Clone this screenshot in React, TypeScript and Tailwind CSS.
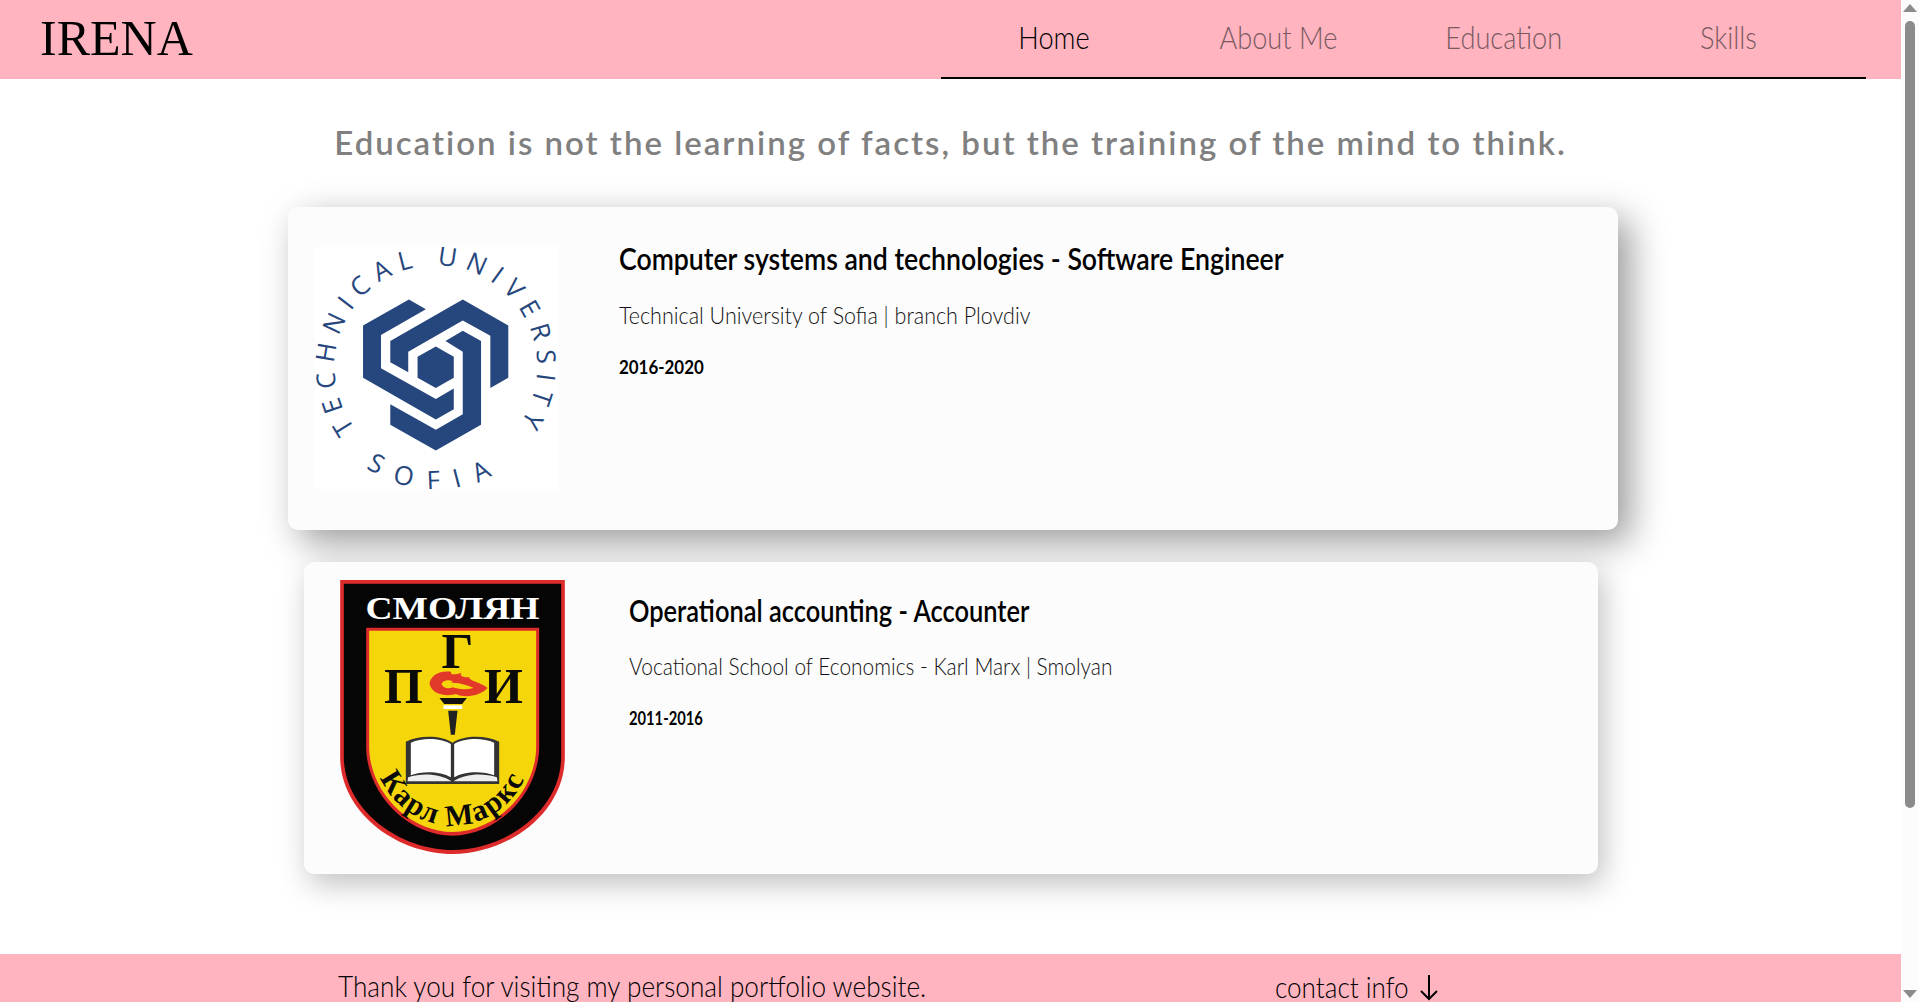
const navItems = [
  { label: "Home", active: true },
  { label: "About Me", active: false },
  { label: "Education", active: false },
  { label: "Skills", active: false },
];

function TuLogo() {
  return (
    <svg viewBox="105 140 733 728" className="w-[244px] h-[242px] shrink-0 bg-white">
      <defs>
        <path id="tu-top" d="M315 764 A305 305 0 1 1 621 764" />
        <path id="tu-bottom" d="M186 737 A368 368 0 0 0 750 737" />
      </defs>
      <g fill="#26477d">
        <polygon points="387,298 438,327 303,405 303,505 468,597 522,566 522,628 468,659 249,533 249,376" />
        <polygon points="331,423 549,298 686,376 686,533 632,564 632,407 549,361 385,455 385,517 331,487" />
        <polygon points="549,392 604,423 604,675 468,752 331,675 331,613 468,690 549,643 549,455 497,423" />
        <polygon points="468,439 522,470 522,533 468,564 413,533 413,470" />
      </g>
      <text fill="#26477d" fontFamily="'Open Sans', sans-serif" fontWeight="500" fontSize="78" letterSpacing="25">
        <textPath href="#tu-top" startOffset="50%" textAnchor="middle">TECHNICAL UNIVERSITY</textPath>
      </text>
      <text fill="#26477d" fontFamily="'Open Sans', sans-serif" fontWeight="500" fontSize="78" letterSpacing="46">
        <textPath href="#tu-bottom" startOffset="50%" textAnchor="middle">SOFIA</textPath>
      </text>
    </svg>
  );
}

function SchoolLogo() {
  return (
    <svg viewBox="148 60 674 822" className="w-[225px] h-[274px] shrink-0">
      <defs>
        <path id="school-arc" d="M249 560 A236 236 0 0 0 721 560" />
      </defs>
      <path d="M148 60H822V590C822 760 650 882 485 882C320 882 148 760 148 590Z" fill="#dc2b2a" />
      <path d="M159 71H811V590C811 750 645 870 485 870C325 870 159 750 159 590Z" fill="#050505" />
      <path d="M226 203H745V560C745 700 620 827 485 827C350 827 226 700 226 560Z" fill="#dc2b2a" />
      <path d="M235 212H736V560C736 695 615 816 485 816C355 816 235 695 235 560Z" fill="#f5d60b" />
      <text x="224" y="178" textLength="522" lengthAdjust="spacingAndGlyphs" fill="#fff" fontFamily="'Liberation Serif', serif" fontWeight="700" fontSize="96">СМОЛЯН</text>
      <g fill="#0a0a0a" fontFamily="'Liberation Serif', serif" fontWeight="700" fontSize="150">
        <text x="500" y="325" textAnchor="middle">Г</text>
        <text x="338" y="430" textAnchor="middle">П</text>
        <text x="638" y="430" textAnchor="middle">И</text>
      </g>
      {/* torch */}
      <path d="M416 372C418 345 450 330 482 336C474 344 492 345 512 338C504 350 522 352 536 352C532 362 572 368 590 384C570 406 525 416 495 402C470 410 425 406 416 372Z" fill="#e2382a" />
      <path d="M452 372C456 360 474 358 486 364C470 370 500 368 512 372C530 376 540 380 548 384C525 390 500 388 486 382C472 388 456 384 452 372Z" fill="#f5d60b" />
      <path d="M446 414H528L514 432H460Z" fill="#111" />
      <rect x="458" y="436" width="56" height="11" fill="#fff" />
      <path d="M472 452H500L492 524H480Z" fill="#222" />
      {/* book */}
      <path d="M345 545C385 525 450 525 485 548C520 525 585 525 625 545V672H345Z" fill="#333" />
      <path d="M352 652C395 638 450 642 482 664H350Z" fill="#eee" />
      <path d="M618 652C575 638 520 642 488 664H620Z" fill="#eee" />
      <path d="M360 548C395 532 450 534 480 552V652C450 634 395 632 360 646Z" fill="#fff" />
      <path d="M610 548C575 532 520 534 490 552V652C520 634 575 632 610 646Z" fill="#fff" />
      <text fill="#0a0a0a" fontFamily="'Liberation Serif', serif" fontWeight="700" fontSize="90" letterSpacing="5">
        <textPath href="#school-arc" startOffset="50%" textAnchor="middle">Карл Маркс</textPath>
      </text>
    </svg>
  );
}

function Scrollbar() {
  return (
    <div className="w-[18px] shrink-0 h-full bg-[#fcfcfc] flex flex-col items-center">
      <div className="mt-[4px] w-0 h-0 border-x-[7px] border-x-transparent border-b-[8px] border-b-[#8b8b8b]" />
      <div className="mt-[9px] w-[10px] h-[787px] rounded-[5px] bg-[#8b8b8b]" />
      <div className="mt-auto mb-[4px] w-0 h-0 border-x-[7px] border-x-transparent border-t-[8px] border-t-[#8b8b8b]" />
    </div>
  );
}

export default function App() {
  return (
    <div className="flex h-screen overflow-hidden bg-white text-black font-['Lato',sans-serif]">
      <div className="flex-1 min-w-0 flex flex-col">
        <header className="h-[79px] shrink-0 bg-[#ffb4c0] flex items-center justify-between">
          <div className="ml-[40px] -mt-[4px] font-['Liberation_Serif',serif] text-[50px] leading-none">IRENA</div>
          <nav className="w-[925px] mr-[35px] h-full flex pr-[25px] border-b-2 border-black">
            {navItems.map((item) => (
              <div
                key={item.label}
                className={item.active ? "w-[225px] flex items-center justify-center pb-[4px] text-[32px] font-light text-black" : "w-[225px] flex items-center justify-center pb-[4px] text-[32px] font-light text-[#7a5a60]"}
              >
                <span className="inline-block scale-x-[0.85] whitespace-nowrap">{item.label}</span>
              </div>
            ))}
          </nav>
        </header>

        <main className="flex-1 flex flex-col items-center">
          <h1 className="mt-[42px] h-[42px] mb-[2px] text-[33px] leading-[42px] font-semibold tracking-[2px] text-[#808080] whitespace-nowrap">
            Education is not the learning of facts, but the training of the mind to think.
          </h1>

          <article className="mt-[42px] ml-[5px] w-[1330px] h-[323px] rounded-[10px] bg-[#fcfcfc] shadow-[12px_12px_36px_rgba(0,0,0,0.4)] flex pl-[27px] pt-[40px]">
            <TuLogo />
            <div className="ml-[60px] -mt-[9px]">
              <h2 className="text-[31px] leading-[40px] font-semibold whitespace-nowrap origin-left scale-x-[0.86]">Computer systems and technologies - Software Engineer</h2>
              <p className="mt-[21px] text-[24px] leading-[32px] font-light text-[#111] whitespace-nowrap origin-left scale-x-[0.895]">Technical University of Sofia | branch Plovdiv</p>
              <p className="mt-[24px] text-[19px] leading-[24px] font-bold whitespace-nowrap origin-left scale-x-[0.89]">2016-2020</p>
            </div>
          </article>

          <article className="mt-[32px] w-[1294px] h-[312px] rounded-[10px] bg-[#fcfcfc] shadow-[5px_10px_30px_rgba(0,0,0,0.25)] flex pl-[36px] pt-[18px]">
            <SchoolLogo />
            <div className="ml-[64px] mt-[10px]">
              <h2 className="text-[31px] leading-[40px] font-semibold whitespace-nowrap origin-left scale-x-[0.82]">Operational accounting - Accounter</h2>
              <p className="mt-[20px] text-[24px] leading-[32px] font-light text-[#111] whitespace-nowrap origin-left scale-x-[0.87]">Vocational School of Economics - Karl Marx | Smolyan</p>
              <p className="mt-[24px] text-[19px] leading-[24px] font-bold whitespace-nowrap origin-left scale-x-[0.775]">2011-2016</p>
            </div>
          </article>
        </main>

        <footer className="h-[48px] shrink-0 bg-[#ffb4c0] flex items-start pl-[338px]">
          <p className="w-[937px] mt-[13px] text-[30px] leading-[36px] font-light whitespace-nowrap origin-left scale-x-[0.873]">Thank you for visiting my personal portfolio website.</p>
          <p className="w-[144px] mt-[14px] text-[30px] leading-[36px] font-light whitespace-nowrap origin-left scale-x-[0.87]">contact info</p>
          <svg viewBox="0 0 20 28" className="w-[20px] h-[28px] mt-[19px]" fill="none" stroke="#000" strokeWidth="2">
            <path d="M10 2V26M2 18L10 26L18 18" />
          </svg>
        </footer>
      </div>
      <Scrollbar />
    </div>
  );
}
